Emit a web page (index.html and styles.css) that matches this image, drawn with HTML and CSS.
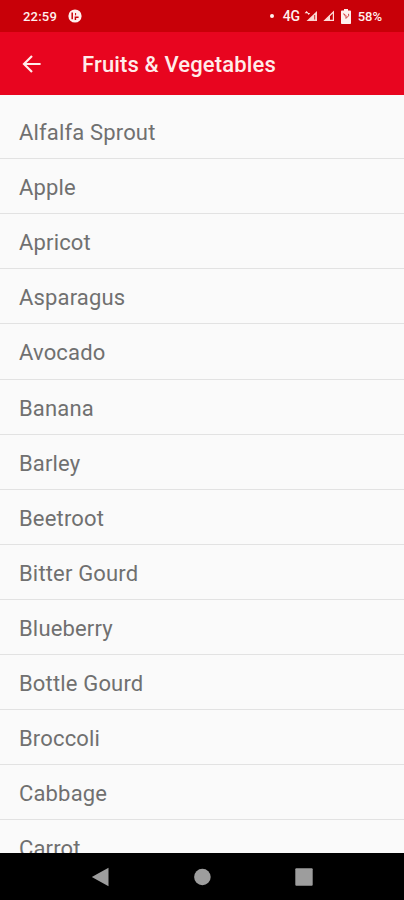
FILE: index.html
```html
<!DOCTYPE html>
<html lang="en">
<head>
    <meta charset="UTF-8">
    <meta name="viewport" content="width=device-width, initial-scale=1.0">
    <title>Fruits &amp; Vegetables</title>
    <link rel="stylesheet" href="styles.css">
</head>
<body>
    <div class="screen">
        <div class="status-bar">
            <span class="clock">22:59</span>
            <svg class="notification" width="14" height="14" viewBox="0 0 14 14">
                <circle cx="7" cy="7" r="6.6" fill="#fff0ee"/>
                <path d="M4.2 3.4v6.8M7.4 11V8.2h3.2" fill="none" stroke="#c80008" stroke-width="1.5"/>
                <path d="M7.6 4v2.4" stroke="#c80008" stroke-width="1"/>
            </svg>
            <span class="dot"></span>
            <span class="network">4G</span>
            <svg class="signal-data" width="14" height="12" viewBox="0 0 14 12">
                <path d="M13 1v10H2.5z" fill="#fbd5d2"/>
                <path d="M10.6 5v4.5" stroke="#d84848" stroke-width="1.2"/>
                <path d="M.6 3.2l2-2.2 2 2.2zM3.2 3h3L4.7 5z" fill="#ffe9e7"/>
            </svg>
            <svg class="signal" width="12" height="12" viewBox="0 0 12 12">
                <path d="M10.4 2v8.4H1.8z" fill="none" stroke="#ffdcd9" stroke-width="1.2"/>
                <path d="M7 5.5v5H2z" fill="#ffdcd9"/>
            </svg>
            <svg class="battery" width="10" height="15" viewBox="0 0 10 15">
                <path d="M3 0h4v1.6h2.2q.8 0 .8.8v11.8q0 .8-.8.8H.8q-.8 0-.8-.8V2.4q0-.8.8-.8H3z" fill="#fff0ee"/>
                <path d="M2.2 4.8L4 5.6v1.6M7.6 4.8v2L5 9.4V6.4" fill="none" stroke="#d23a3c" stroke-width="1"/>
            </svg>
            <span class="percent">58%</span>
        </div>
        <header class="app-bar">
            <svg class="back" width="20" height="20" viewBox="0 0 20 20">
                <path d="M18.6 10H2.4M10 2L2 10l8 8" fill="none" stroke="#ffecea" stroke-width="2.2"/>
            </svg>
            <h1>Fruits &amp; Vegetables</h1>
        </header>
        <ul class="list">
            <li>Alfalfa Sprout</li>
            <li>Apple</li>
            <li>Apricot</li>
            <li>Asparagus</li>
            <li>Avocado</li>
            <li>Banana</li>
            <li>Barley</li>
            <li>Beetroot</li>
            <li>Bitter Gourd</li>
            <li>Blueberry</li>
            <li>Bottle Gourd</li>
            <li>Broccoli</li>
            <li>Cabbage</li>
            <li>Carrot</li>
        </ul>
        <nav class="nav-bar">
            <svg width="18" height="20" viewBox="0 0 18 20">
                <path d="M17.5.8v18.4L.8 10z" fill="#9d9d9d"/>
            </svg>
            <svg width="18" height="18" viewBox="0 0 18 18">
                <circle cx="9.4" cy="9" r="8.3" fill="#9d9d9d"/>
            </svg>
            <svg width="18" height="18" viewBox="0 0 18 18">
                <rect x=".3" y=".3" width="17.4" height="17.4" rx="1" fill="#9d9d9d"/>
            </svg>
        </nav>
    </div>
</body>
</html>
```

FILE: styles.css
```css
body {
    margin: 0;
    font-family: Roboto, "Liberation Sans", sans-serif;
    background-color: #000;
}
.screen {
    display: flex;
    flex-direction: column;
    height: 900px;
    overflow: hidden;
}
.status-bar {
    display: flex;
    align-items: center;
    flex: 0 0 32px;
    padding: 0 22px 0 23px;
    background-color: #c80008;
    color: #fff0ee;
    font-size: 13px;
    font-weight: 500;
}
.clock {
    letter-spacing: 0.2px;
}
.notification {
    margin-left: 11px;
}
.dot {
    width: 4px;
    height: 4px;
    margin-left: auto;
    border-radius: 50%;
    background-color: #fff0ee;
}
.network {
    margin-left: 9px;
    font-size: 14px;
    letter-spacing: -0.3px;
}
.signal-data {
    margin-left: 4px;
}
.signal {
    margin-left: 5px;
}
.battery {
    margin-left: 6px;
}
.percent {
    margin-left: 7px;
}
.app-bar {
    display: flex;
    align-items: center;
    flex: 0 0 63px;
    padding-left: 22px;
    background-color: #e8051f;
    color: #ffecea;
}
.app-bar h1 {
    margin: 2px 0 0 40px;
    font-size: 22px;
    font-weight: 500;
    line-height: 26px;
    letter-spacing: 0.14px;
}
.list {
    flex: 1;
    min-height: 0;
    margin: 0;
    padding: 9px 0 0;
    overflow: hidden;
    list-style: none;
    background-color: #fafafa;
}
.list li {
    box-sizing: border-box;
    height: 55.12px;
    padding-left: 19px;
    border-bottom: 1px solid #e2e2e2;
    color: #707070;
    font-size: 22px;
    line-height: 57px;
    letter-spacing: 0.16px;
}
.nav-bar {
    display: flex;
    align-items: center;
    justify-content: center;
    gap: 84px;
    flex: 0 0 47px;
    background-color: #000;
}
```
